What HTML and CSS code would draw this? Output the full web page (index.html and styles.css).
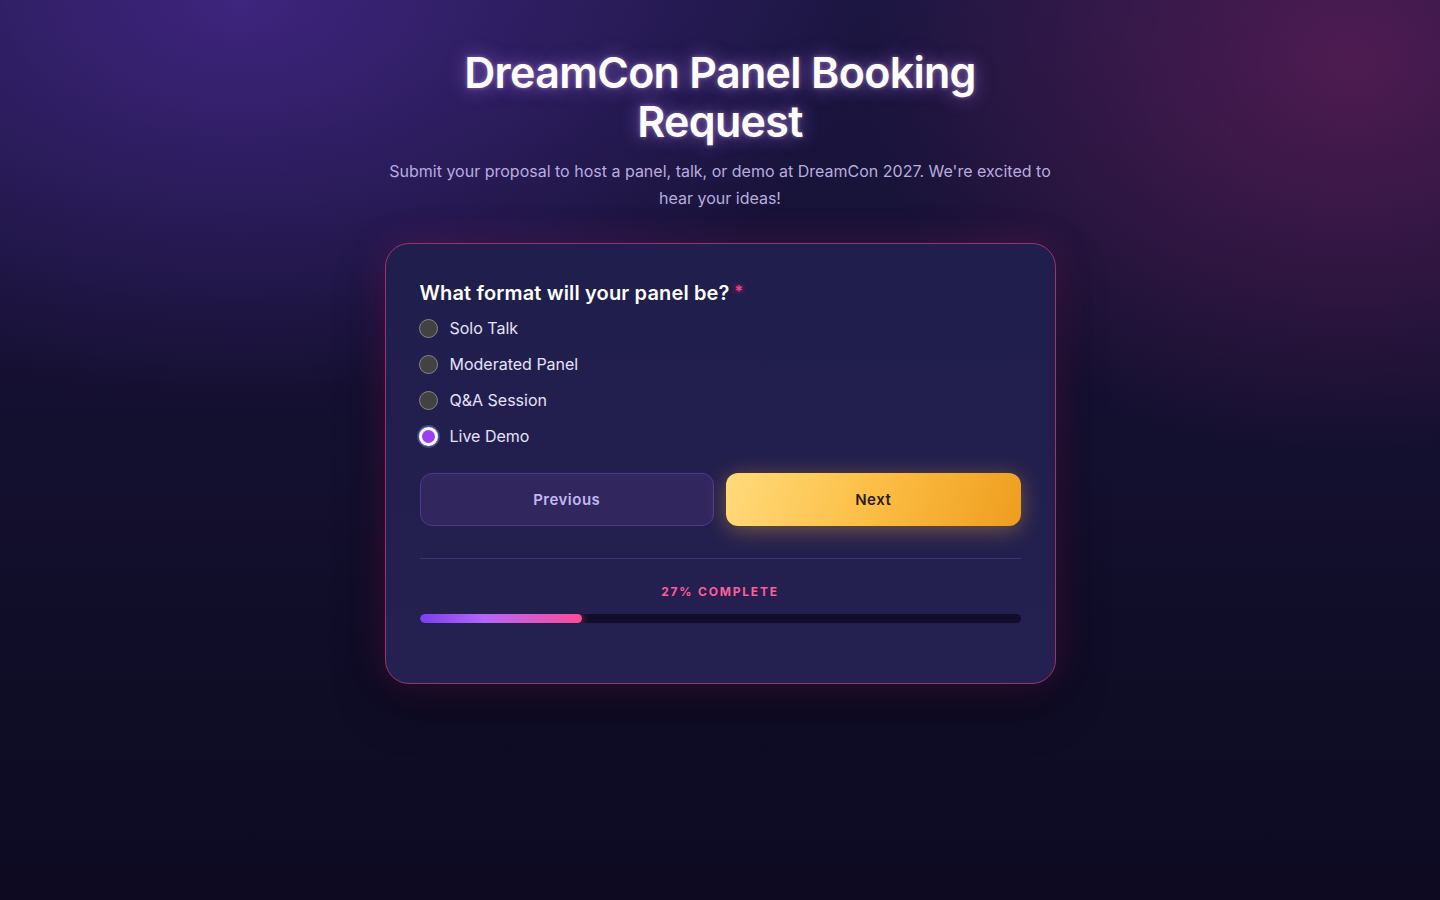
FILE: index.html
```html
<!DOCTYPE html>
<html lang="en">
<head>
<meta charset="utf-8">
<title>DreamCon Panel Booking Request</title>
<link rel="stylesheet" href="styles.css">
</head>
<body>
<main class="page">
  <header class="hero">
    <h1 class="title">DreamCon Panel Booking Request</h1>
    <p class="subtitle">Submit your proposal to host a panel, talk, or demo at DreamCon 2027. We're excited to hear your ideas!</p>
  </header>
  <section class="card">
    <fieldset class="question">
      <legend class="q-label">What format will your panel be?<span class="req">*</span></legend>
      <label class="option"><input type="radio" name="format" class="radio"><span>Solo Talk</span></label>
      <label class="option"><input type="radio" name="format" class="radio"><span>Moderated Panel</span></label>
      <label class="option"><input type="radio" name="format" class="radio"><span>Q&amp;A Session</span></label>
      <label class="option"><input type="radio" name="format" class="radio focused" checked><span>Live Demo</span></label>
    </fieldset>
    <div class="actions">
      <button class="btn btn-prev" type="button">Previous</button>
      <button class="btn btn-next" type="button">Next</button>
    </div>
    <div class="progress">
      <div class="progress-label">27% COMPLETE</div>
      <div class="track"><div class="fill" style="width:27%"></div></div>
    </div>
  </section>
</main>
</body>
</html>
```

FILE: styles.css
```css
* { box-sizing: border-box; }
html, body { margin: 0; padding: 0; }
body {
  min-height: 900px;
  font-family: Inter, "Noto Sans", sans-serif;
  color: #fff;
  background-color: #0e0b24;
  background-image:
    radial-gradient(ellipse 620px 400px at 240px 0px, rgba(70, 40, 140, 0.8), rgba(70, 40, 140, 0) 100%),
    radial-gradient(ellipse 480px 400px at 1350px 60px, rgba(105, 30, 90, 0.65), rgba(105, 30, 90, 0) 100%),
    linear-gradient(180deg, #1c1642 0%, #161134 35%, #100d28 70%, #0d0a22 100%);
}
.page {
  display: flex;
  flex-direction: column;
  align-items: center;
  padding-top: 48px;
}
.hero {
  width: 672px;
  text-align: center;
}
.title {
  margin: 0 auto;
  width: 560px;
  font-family: Inter, sans-serif;
  font-weight: 600;
  font-size: 43px;
  line-height: 49px;
  letter-spacing: -0.7px;
  color: #fff;
  text-shadow: 0 0 18px rgba(190, 140, 255, 0.55), 0 0 4px rgba(255, 200, 255, 0.4);
}
.subtitle {
  margin: 12px 0 0;
  font-size: 16px;
  line-height: 27px;
  color: #b7addf;
}
.card {
  margin-top: 31px;
  width: 671px;
  padding: 37px 34px 60px;
  background: linear-gradient(180deg, #201e4c 0%, #242050 100%);
  border: 1px solid #a03070;
  border-radius: 24px;
  box-shadow: 0 0 36px rgba(200, 40, 130, 0.22), 0 20px 50px rgba(0, 0, 0, 0.35);
}
.question {
  margin: 0;
  padding: 0;
  border: 0;
  display: flex;
  flex-direction: column;
  gap: 14px;
}
.q-label {
  padding: 0;
  margin-bottom: 12px;
  font-size: 20px;
  font-weight: 600;
  letter-spacing: 0.15px;
  color: #fff;
}
.req {
  margin-left: 5px;
  color: #ff3d8e;
  font-size: 16px;
  vertical-align: top;
  text-shadow: 0 0 6px rgba(255, 60, 140, 0.6);
}
.option {
  display: flex;
  align-items: center;
  gap: 12px;
  font-size: 16px;
  line-height: 22px;
  color: #e6e2fb;
}
.radio {
  appearance: none;
  -webkit-appearance: none;
  margin: 0 0 0 -1px;
  width: 19px;
  height: 19px;
  border-radius: 50%;
  background: #424242;
  border: 1px solid #858585;
  flex: none;
}
.radio:checked {
  background: #9b3ff5;
  border: 3px solid #ffffff;
  box-shadow: 0 0 0 1px #8a3ae8;
}
.radio.focused {
  outline: 1px solid #1e6a70;
  outline-offset: 1px;
}
.actions {
  margin-top: 26px;
  display: grid;
  grid-template-columns: 1fr 1fr;
  gap: 12px;
}
.btn {
  height: 53px;
  border-radius: 12px;
  font-family: Inter, sans-serif;
  font-size: 15px;
  font-weight: 600;
  letter-spacing: 0.5px;
  cursor: pointer;
}
.btn-prev {
  background: #32265f;
  border: 1px solid #4b3a8e;
  color: #c3b7f2;
}
.btn-next {
  border: 0;
  background: linear-gradient(110deg, #ffdb7c 0%, #fcbe44 50%, #ee9d1e 100%);
  color: #2a1c0a;
  box-shadow: 0 4px 22px rgba(255, 180, 50, 0.38);
}
.progress {
  margin-top: 32px;
  border-top: 1px solid #3a3470;
  padding-top: 25px;
}
.progress-label {
  text-align: center;
  font-size: 12px;
  font-weight: 700;
  letter-spacing: 1.8px;
  color: #ff5c9c;
  line-height: 16px;
}
.track {
  margin-top: 14px;
  height: 9px;
  border-radius: 6px;
  background: #120d2a;
  overflow: hidden;
}
.fill {
  height: 100%;
  border-radius: 6px;
  background: linear-gradient(90deg, #7a3ff0 0%, #b467f8 40%, #ff4a98 100%);
  box-shadow: 0 0 8px rgba(255, 80, 160, 0.6);
}
```
